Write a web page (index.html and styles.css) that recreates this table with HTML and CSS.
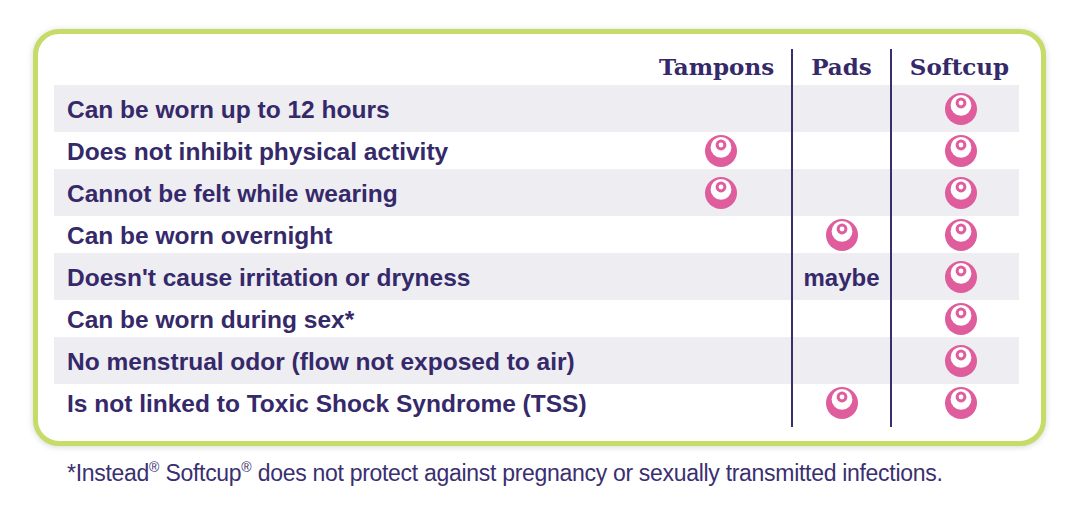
FILE: index.html
```html
<!DOCTYPE html>
<html lang="en">
<head>
<meta charset="utf-8">
<title>Softcup comparison</title>
<link rel="stylesheet" href="styles.css">
</head>
<body>
<svg class="defs" width="0" height="0" aria-hidden="true">
  <symbol id="cup" viewBox="0 0 32 32">
    <circle cx="16" cy="16" r="16" fill="#e05d9d"/>
    <circle cx="16" cy="12.4" r="10.4" fill="#fff"/>
    <circle cx="16" cy="10" r="5.4" fill="#e05d9d"/>
    <circle cx="16" cy="10" r="2.4" fill="#fff"/>
  </symbol>
</svg>
<main class="page">
  <section class="card">
    <div class="row head">
      <div class="label"></div>
      <div class="cell tampons">Tampons</div>
      <div class="div"></div>
      <div class="cell pads">Pads</div>
      <div class="div"></div>
      <div class="cell softcup">Softcup</div>
    </div>

    <div class="row stripe">
      <div class="label">Can be worn up to 12 hours</div>
      <div class="cell tampons"></div>
      <div class="div"></div>
      <div class="cell pads"></div>
      <div class="div"></div>
      <div class="cell softcup"><svg class="ic"><use href="#cup"/></svg></div>
    </div>
    <div class="row plain">
      <div class="label">Does not inhibit physical activity</div>
      <div class="cell tampons"><svg class="ic"><use href="#cup"/></svg></div>
      <div class="div"></div>
      <div class="cell pads"></div>
      <div class="div"></div>
      <div class="cell softcup"><svg class="ic"><use href="#cup"/></svg></div>
    </div>
    <div class="row stripe">
      <div class="label">Cannot be felt while wearing</div>
      <div class="cell tampons"><svg class="ic"><use href="#cup"/></svg></div>
      <div class="div"></div>
      <div class="cell pads"></div>
      <div class="div"></div>
      <div class="cell softcup"><svg class="ic"><use href="#cup"/></svg></div>
    </div>
    <div class="row plain">
      <div class="label">Can be worn overnight</div>
      <div class="cell tampons"></div>
      <div class="div"></div>
      <div class="cell pads"><svg class="ic"><use href="#cup"/></svg></div>
      <div class="div"></div>
      <div class="cell softcup"><svg class="ic"><use href="#cup"/></svg></div>
    </div>
    <div class="row stripe">
      <div class="label">Doesn't cause irritation or dryness</div>
      <div class="cell tampons"></div>
      <div class="div"></div>
      <div class="cell pads maybe">maybe</div>
      <div class="div"></div>
      <div class="cell softcup"><svg class="ic"><use href="#cup"/></svg></div>
    </div>
    <div class="row plain">
      <div class="label">Can be worn during sex*</div>
      <div class="cell tampons"></div>
      <div class="div"></div>
      <div class="cell pads"></div>
      <div class="div"></div>
      <div class="cell softcup"><svg class="ic"><use href="#cup"/></svg></div>
    </div>
    <div class="row stripe">
      <div class="label">No menstrual odor (flow not exposed to air)</div>
      <div class="cell tampons"></div>
      <div class="div"></div>
      <div class="cell pads"></div>
      <div class="div"></div>
      <div class="cell softcup"><svg class="ic"><use href="#cup"/></svg></div>
    </div>
    <div class="row plain">
      <div class="label">Is not linked to Toxic Shock Syndrome (TSS)</div>
      <div class="cell tampons"></div>
      <div class="div"></div>
      <div class="cell pads"><svg class="ic"><use href="#cup"/></svg></div>
      <div class="div"></div>
      <div class="cell softcup"><svg class="ic"><use href="#cup"/></svg></div>
    </div>
    <div class="row tail">
      <div class="label"></div>
      <div class="cell tampons"></div>
      <div class="div"></div>
      <div class="cell pads"></div>
      <div class="div"></div>
      <div class="cell softcup"></div>
    </div>
  </section>
  <p class="note">*Instead<sup>®</sup> Softcup<sup>®</sup> does not protect against pregnancy or sexually transmitted infections.</p>
</main>
</body>
</html>
```

FILE: styles.css
```css
html, body {
  margin: 0;
  padding: 0;
  background: #ffffff;
}

.defs {
  position: absolute;
  width: 0;
  height: 0;
  overflow: hidden;
}

.page {
  padding: 29px 0 0 33px;
  font-family: "Liberation Sans", Arial, sans-serif;
  color: #35296a;
}

.card {
  box-sizing: border-box;
  width: 1013px;
  height: 417px;
  border: 5px solid #c6dc68;
  border-radius: 26px;
  background: #ffffff;
  box-shadow: 0 1px 6px rgba(0, 0, 0, 0.16);
  padding: 15px 22px 0 16px;
}

.row {
  display: grid;
  grid-template-columns: 596px 141px 2px 97px 2px 127px;
  align-items: stretch;
}

.row.stripe { height: 47px; background: #eeedf2; }
.row.plain { height: 37px; }
.row.head { height: 36px; }
.row.tail { height: 6px; }

.label {
  display: flex;
  align-items: center;
  padding: 2px 0 0 13px;
  font-size: 24.5px;
  font-weight: bold;
  white-space: nowrap;
}

.cell {
  display: flex;
  align-items: center;
  justify-content: center;
}

.cell.softcup { padding-left: 10px; }

.div { background: #3a2e6c; }

.ic {
  width: 32px;
  height: 32px;
  display: block;
}

.maybe {
  font-size: 24px;
  font-weight: bold;
  padding-top: 2px;
}

.head .cell {
  font-family: "DejaVu Serif", serif;
  font-weight: bold;
  font-size: 23px;
  align-items: flex-end;
  padding-bottom: 7px;
  box-sizing: border-box;
  line-height: 1;
  color: #35296a;
}

.head .cell.tampons { padding-right: 8px; }
.head .cell.softcup { padding-left: 8px; }

.note {
  margin: 13px 0 0 34px;
  font-size: 23px;
  letter-spacing: -0.3px;
  color: #3a2f70;
  line-height: 1.25;
}

.note sup {
  font-size: 14px;
  vertical-align: 0;
  position: relative;
  top: -9px;
  letter-spacing: 0;
}
```
